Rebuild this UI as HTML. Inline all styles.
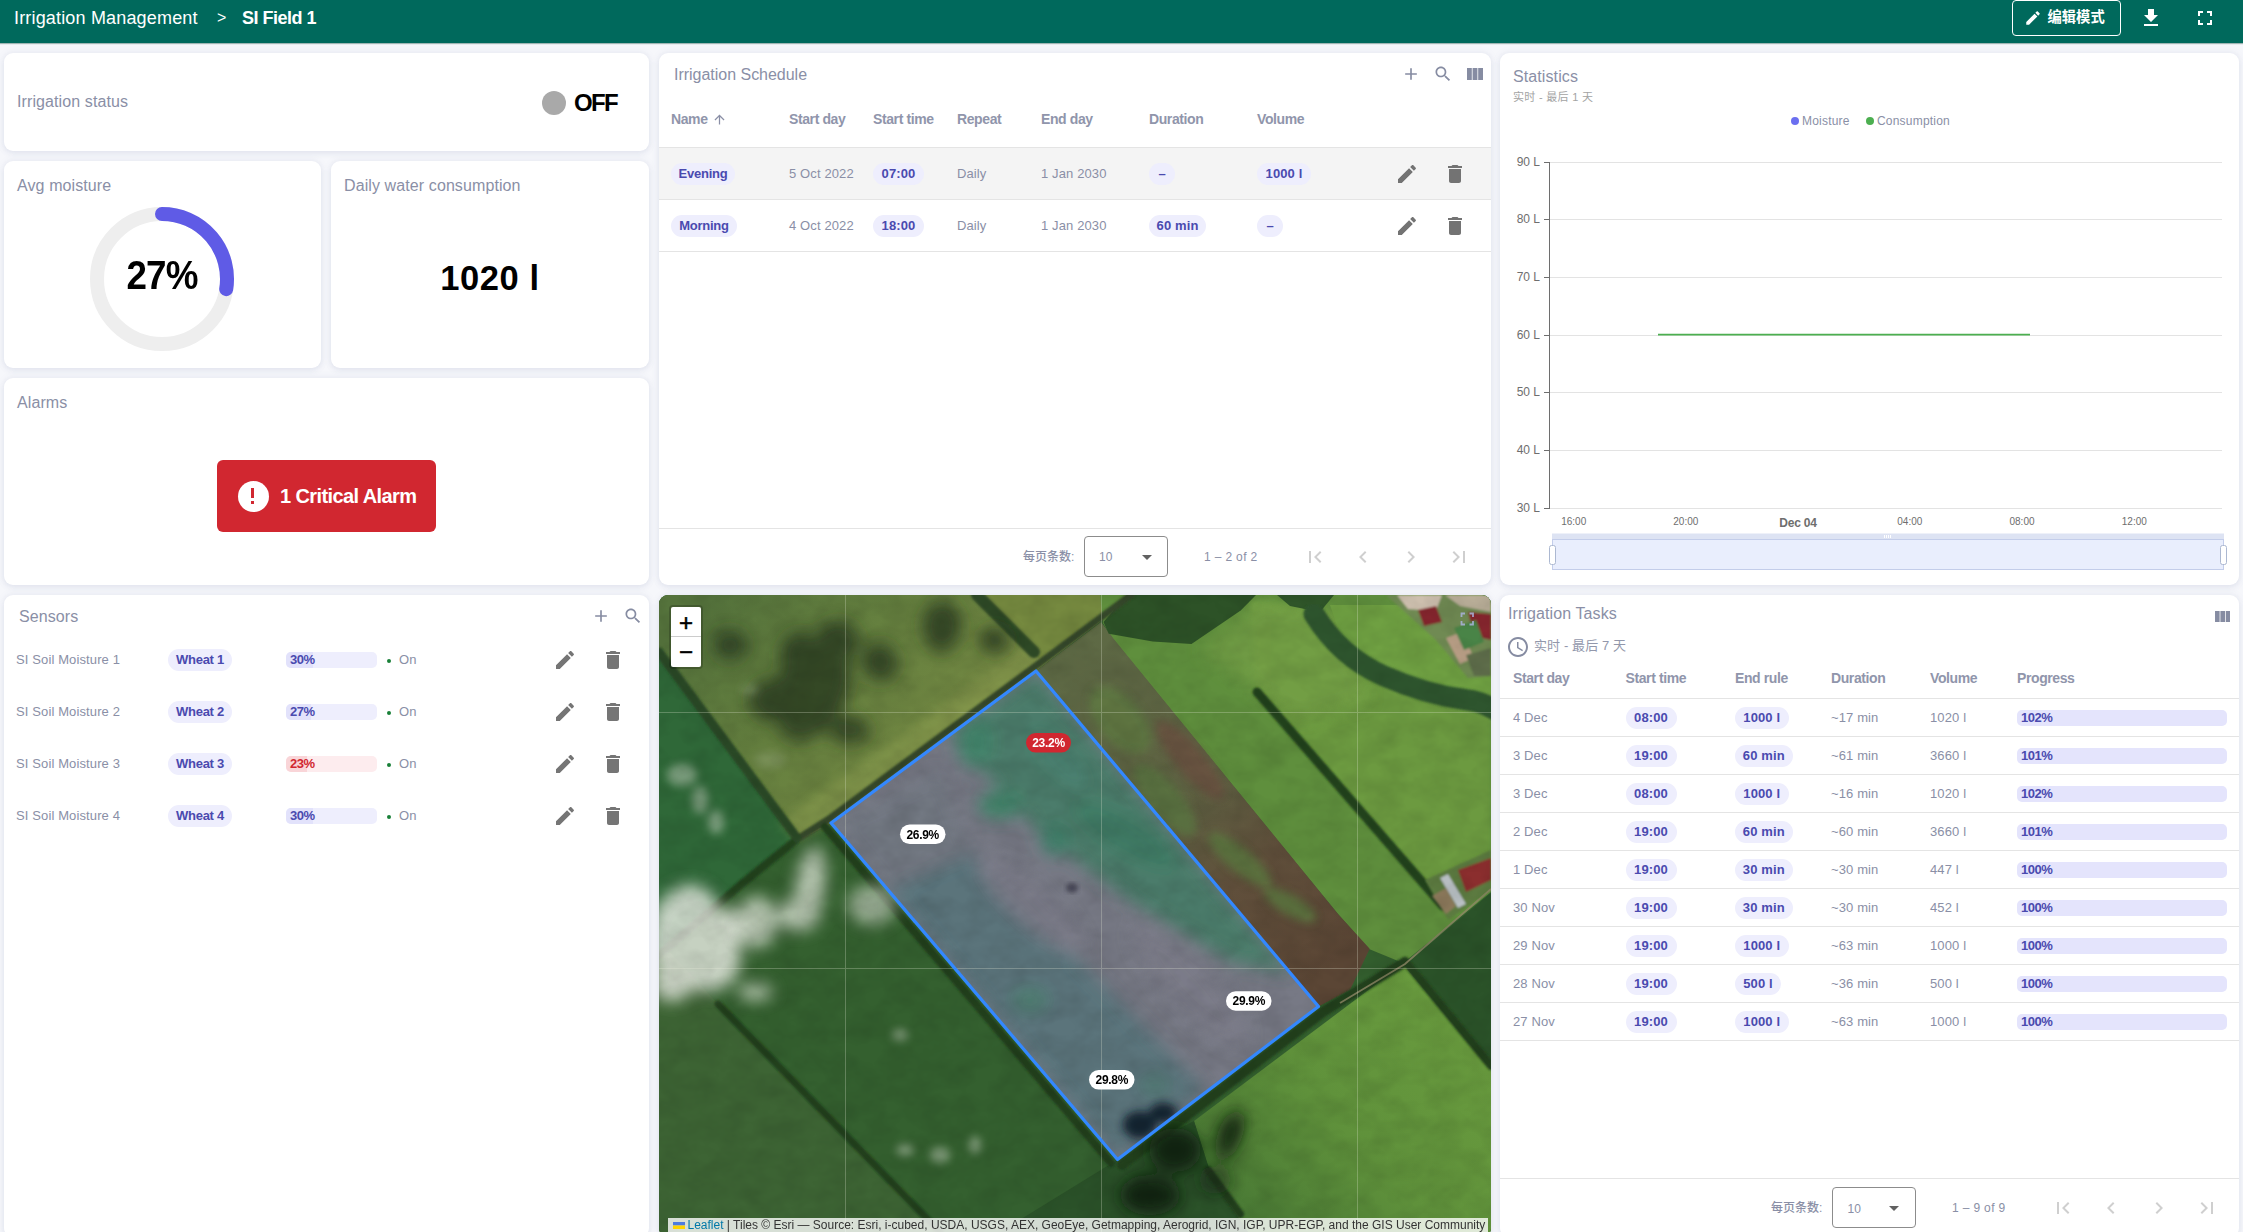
<!DOCTYPE html>
<html lang="zh-CN">
<head>
<meta charset="utf-8">
<title>Irrigation Management - SI Field 1</title>
<style>
*{box-sizing:border-box;margin:0;padding:0}
html,body{width:2243px;height:1232px;overflow:hidden}
body{background:#f6f7fb;font-family:"Liberation Sans","Noto Sans CJK SC",sans-serif;color:#8a8fa6;position:relative;font-size:13px}
.abs{position:absolute}
.hdr{position:absolute;left:0;top:0;width:2243px;height:43px;background:#00695c;color:#fff;box-shadow:0 1px 1px rgba(0,60,50,.35)}
.hdr .t{position:absolute;top:0;height:36px;line-height:36px;font-size:18px;white-space:nowrap}
.card{position:absolute;background:#fff;border-radius:9px;box-shadow:0 0 6px 1px rgba(120,130,170,.10),0 3px 6px rgba(120,130,170,.08);overflow:hidden}
.ttl{position:absolute;font-size:16px;line-height:20px;color:#8a8fa6;white-space:nowrap;letter-spacing:.1px;margin-top:1px}
.tx{position:absolute;white-space:nowrap;line-height:20px}
.ic{position:absolute;fill:#757575}
.pill{position:absolute;height:22px;line-height:22px;letter-spacing:-.25px;border-radius:11px;background:#eeeefd;color:#4a4aaf;font-weight:bold;font-size:13px;text-align:center;white-space:nowrap}
.pill.n{letter-spacing:.12px}
.bar{position:absolute;height:16px;border-radius:5px;background:#eeeefd;overflow:hidden}
.bar i{position:absolute;left:0;top:0;bottom:0;background:#e2e2fb}
.bar b{position:absolute;left:4px;top:0;line-height:16px;font-size:13px;color:#4a4aaf;font-weight:bold;letter-spacing:-.5px}
.bar.red{background:#fdecee}
.bar.red i{background:#f9d5d8}
.bar.red b{color:#d12730}
.hl{position:absolute;height:1px;background:#e4e4e4}
.th{position:absolute;white-space:nowrap;font-size:14px;line-height:20px;color:#9095ab;font-weight:bold;letter-spacing:-.4px}
.td{position:absolute;white-space:nowrap;font-size:13px;line-height:20px;color:#8a8fa6;letter-spacing:.12px}
</style>
</head>
<body>

<!-- ===== top toolbar ===== -->
<div class="hdr">
  <div class="t" style="left:14px;letter-spacing:.17px">Irrigation Management</div>
  <div class="t" style="left:217px;font-size:16px">&gt;</div>
  <div class="t" style="left:242px;font-weight:bold;letter-spacing:-.5px">SI Field 1</div>
  <div class="abs" style="left:2012px;top:0;width:109px;height:36px;border:1px solid #fff;border-radius:4px"></div>
  <svg class="abs" style="left:2024px;top:9px;fill:#fff" width="18" height="18" viewBox="0 0 24 24"><path d="M3 17.25V21h3.75L17.81 9.94l-3.75-3.75L3 17.25zM20.71 7.04c.39-.39.39-1.02 0-1.41l-2.34-2.34c-.39-.39-1.02-.39-1.41 0l-1.83 1.83 3.75 3.75 1.83-1.83z"/></svg>
  <div class="t" style="left:2047.5px;font-size:14.3px;font-weight:bold;line-height:34px">编辑模式</div>
  <svg class="abs" style="left:2139px;top:6px;fill:#fff" width="24" height="24" viewBox="0 0 24 24"><path d="M19 9h-4V3H9v6H5l7 7 7-7zM5 18v2h14v-2H5z"/></svg>
  <svg class="abs" style="left:2193px;top:6px;fill:#fff" width="24" height="24" viewBox="0 0 24 24"><path d="M7 14H5v5h5v-2H7v-3zm-2-4h2V7h3V5H5v5zm12 7h-3v2h5v-5h-2v3zM14 5v2h3v3h2V5h-5z"/></svg>
</div>

<!-- ===== Irrigation status ===== -->
<div class="card" style="left:4px;top:53px;width:645px;height:98px">
  <div class="ttl" style="left:13px;top:38px">Irrigation status</div>
  <div class="abs" style="left:538px;top:38px;width:24px;height:24px;border-radius:50%;background:#a9a9a9"></div>
  <div class="tx" style="left:570px;top:34px;font-size:24px;line-height:32px;font-weight:bold;color:#000;letter-spacing:-1.7px">OFF</div>
</div>

<!-- ===== Avg moisture ===== -->
<div class="card" style="left:4px;top:161px;width:317px;height:207px">
  <div class="ttl" style="left:13px;top:14px">Avg moisture</div>
  <svg class="abs" style="left:78px;top:38px" width="160" height="160" viewBox="0 0 160 160">
    <circle cx="80" cy="80" r="65" fill="none" stroke="#eeeeee" stroke-width="14"/>
    <path d="M80 15 A65 65 0 0 1 144.2 90.2" fill="none" stroke="#5f5be6" stroke-width="14" stroke-linecap="round"/>
  </svg>
  <div class="tx" style="left:78px;top:88px;width:160px;text-align:center;font-size:40px;line-height:52px;font-weight:bold;color:#000;letter-spacing:-1px;transform:scaleX(.92)">27%</div>
</div>

<!-- ===== Daily water consumption ===== -->
<div class="card" style="left:331px;top:161px;width:318px;height:207px">
  <div class="ttl" style="left:13px;top:14px">Daily water consumption</div>
  <div class="tx" style="left:0;top:91.5px;width:318px;text-align:center;font-size:34.5px;line-height:50px;font-weight:bold;color:#000;letter-spacing:.6px">1020 l</div>
</div>

<!-- ===== Alarms ===== -->
<div class="card" style="left:4px;top:378px;width:645px;height:207px">
  <div class="ttl" style="left:13px;top:14px">Alarms</div>
  <div class="abs" style="left:213px;top:82px;width:219px;height:72px;border-radius:6px;background:#d12730"></div>
  <div class="abs" style="left:233.5px;top:102.5px;width:31px;height:31px;border-radius:50%;background:#fff"></div>
  <div class="abs" style="left:247px;top:110px;width:3px;height:10px;background:#d12730"></div>
  <div class="abs" style="left:247px;top:123px;width:3px;height:3px;background:#d12730"></div>
  <div class="tx" style="left:276px;top:104px;font-size:20px;line-height:28px;font-weight:bold;color:#fff;letter-spacing:-.6px">1 Critical Alarm</div>
</div>

<!-- ===== Sensors ===== -->
<div class="card" style="left:4px;top:595px;width:645px;height:642px">
  <div class="ttl" style="left:15px;top:11px">Sensors</div>
  <svg class="ic" style="left:586.7px;top:10.9px;fill:#868ca2" width="20" height="20" viewBox="0 0 24 24"><path d="M19 13h-6v6h-2v-6H5v-2h6V5h2v6h6v2z"/></svg>
  <svg class="ic" style="left:618.7px;top:11.2px;fill:#868ca2" width="20" height="20" viewBox="0 0 24 24"><path d="M15.5 14h-.79l-.28-.27C15.41 12.59 16 11.11 16 9.5 16 5.91 13.09 3 9.5 3S3 5.91 3 9.5 5.91 16 9.5 16c1.61 0 3.09-.59 4.23-1.57l.27.28v.79l5 4.99L20.49 19l-4.99-5zm-6 0C7.01 14 5 11.99 5 9.5S7.01 5 9.5 5 14 7.01 14 9.5 11.99 14 9.5 14z"/></svg>
  <div class="td" style="left:12px;top:55px">SI Soil Moisture 1</div>
  <div class="pill" style="left:164px;top:54px;width:64px">Wheat 1</div>
  <div class="bar" style="left:282px;top:57px;width:91px"><i style="width:30%"></i><b>30%</b></div>
  <div class="abs" style="left:383px;top:64px;width:4px;height:4px;border-radius:50%;background:#198038"></div>
  <div class="td" style="left:395px;top:55px">On</div>
  <svg class="ic" style="left:549px;top:53px" width="24" height="24" viewBox="0 0 24 24"><path d="M3 17.25V21h3.75L17.81 9.94l-3.75-3.75L3 17.25zM20.71 7.04c.39-.39.39-1.02 0-1.41l-2.34-2.34c-.39-.39-1.02-.39-1.41 0l-1.83 1.83 3.75 3.75 1.83-1.83z"/></svg>
  <svg class="ic" style="left:597px;top:53px" width="24" height="24" viewBox="0 0 24 24"><path d="M6 19c0 1.1.9 2 2 2h8c1.1 0 2-.9 2-2V7H6v12zM19 4h-3.5l-1-1h-5l-1 1H5v2h14V4z"/></svg>
  <div class="td" style="left:12px;top:107px">SI Soil Moisture 2</div>
  <div class="pill" style="left:164px;top:106px;width:64px">Wheat 2</div>
  <div class="bar" style="left:282px;top:109px;width:91px"><i style="width:27%"></i><b>27%</b></div>
  <div class="abs" style="left:383px;top:116px;width:4px;height:4px;border-radius:50%;background:#198038"></div>
  <div class="td" style="left:395px;top:107px">On</div>
  <svg class="ic" style="left:549px;top:105px" width="24" height="24" viewBox="0 0 24 24"><path d="M3 17.25V21h3.75L17.81 9.94l-3.75-3.75L3 17.25zM20.71 7.04c.39-.39.39-1.02 0-1.41l-2.34-2.34c-.39-.39-1.02-.39-1.41 0l-1.83 1.83 3.75 3.75 1.83-1.83z"/></svg>
  <svg class="ic" style="left:597px;top:105px" width="24" height="24" viewBox="0 0 24 24"><path d="M6 19c0 1.1.9 2 2 2h8c1.1 0 2-.9 2-2V7H6v12zM19 4h-3.5l-1-1h-5l-1 1H5v2h14V4z"/></svg>
  <div class="td" style="left:12px;top:159px">SI Soil Moisture 3</div>
  <div class="pill" style="left:164px;top:158px;width:64px">Wheat 3</div>
  <div class="bar red" style="left:282px;top:161px;width:91px"><i style="width:23%"></i><b>23%</b></div>
  <div class="abs" style="left:383px;top:168px;width:4px;height:4px;border-radius:50%;background:#198038"></div>
  <div class="td" style="left:395px;top:159px">On</div>
  <svg class="ic" style="left:549px;top:157px" width="24" height="24" viewBox="0 0 24 24"><path d="M3 17.25V21h3.75L17.81 9.94l-3.75-3.75L3 17.25zM20.71 7.04c.39-.39.39-1.02 0-1.41l-2.34-2.34c-.39-.39-1.02-.39-1.41 0l-1.83 1.83 3.75 3.75 1.83-1.83z"/></svg>
  <svg class="ic" style="left:597px;top:157px" width="24" height="24" viewBox="0 0 24 24"><path d="M6 19c0 1.1.9 2 2 2h8c1.1 0 2-.9 2-2V7H6v12zM19 4h-3.5l-1-1h-5l-1 1H5v2h14V4z"/></svg>
  <div class="td" style="left:12px;top:211px">SI Soil Moisture 4</div>
  <div class="pill" style="left:164px;top:210px;width:64px">Wheat 4</div>
  <div class="bar" style="left:282px;top:213px;width:91px"><i style="width:30%"></i><b>30%</b></div>
  <div class="abs" style="left:383px;top:220px;width:4px;height:4px;border-radius:50%;background:#198038"></div>
  <div class="td" style="left:395px;top:211px">On</div>
  <svg class="ic" style="left:549px;top:209px" width="24" height="24" viewBox="0 0 24 24"><path d="M3 17.25V21h3.75L17.81 9.94l-3.75-3.75L3 17.25zM20.71 7.04c.39-.39.39-1.02 0-1.41l-2.34-2.34c-.39-.39-1.02-.39-1.41 0l-1.83 1.83 3.75 3.75 1.83-1.83z"/></svg>
  <svg class="ic" style="left:597px;top:209px" width="24" height="24" viewBox="0 0 24 24"><path d="M6 19c0 1.1.9 2 2 2h8c1.1 0 2-.9 2-2V7H6v12zM19 4h-3.5l-1-1h-5l-1 1H5v2h14V4z"/></svg>
</div>


<!-- ===== Irrigation Schedule ===== -->
<div class="card" style="left:659px;top:53px;width:832px;height:532px">
  <div class="ttl" style="left:15px;top:11px;letter-spacing:-.02px">Irrigation Schedule</div>
  <svg class="ic" style="left:742px;top:11px;fill:#868ca2" width="20" height="20" viewBox="0 0 24 24"><path d="M19 13h-6v6h-2v-6H5v-2h6V5h2v6h6v2z"/></svg>
  <svg class="ic" style="left:773.6px;top:11.3px;fill:#868ca2" width="20" height="20" viewBox="0 0 24 24"><path d="M15.5 14h-.79l-.28-.27C15.41 12.59 16 11.11 16 9.5 16 5.91 13.09 3 9.5 3S3 5.91 3 9.5 5.91 16 9.5 16c1.61 0 3.09-.59 4.23-1.57l.27.28v.79l5 4.99L20.49 19l-4.99-5zm-6 0C7.01 14 5 11.99 5 9.5S7.01 5 9.5 5 14 7.01 14 9.5 11.99 14 9.5 14z"/></svg>
  <svg class="ic" style="left:808px;top:15px;fill:#868ca2" width="16" height="12" viewBox="0 0 16 12"><rect x="0" y="0" width="4.8" height="12"/><rect x="5.6" y="0" width="4.8" height="12"/><rect x="11.2" y="0" width="4.8" height="12"/></svg>
  <div class="th" style="left:12px;top:56px">Name</div>
  <div class="th" style="left:130px;top:56px">Start day</div>
  <div class="th" style="left:214px;top:56px">Start time</div>
  <div class="th" style="left:298px;top:56px">Repeat</div>
  <div class="th" style="left:382px;top:56px">End day</div>
  <div class="th" style="left:490px;top:56px">Duration</div>
  <div class="th" style="left:598px;top:56px">Volume</div>
  <svg class="ic" style="left:53px;top:59px;fill:#8a8fa6" width="15" height="15" viewBox="0 0 24 24"><path d="M4 12l1.41 1.41L11 7.83V20h2V7.83l5.58 5.59L20 12l-8-8-8 8z"/></svg>
  <div class="hl" style="left:0;top:94px;width:832px"></div>
  <div class="abs" style="left:0;top:95px;width:832px;height:51px;background:#f4f4f4"></div>
  <div class="hl" style="left:0;top:146px;width:832px"></div>
  <div class="hl" style="left:0;top:198px;width:832px"></div>
  <div class="pill" style="left:12px;top:110px;width:64px">Evening</div>
  <div class="td" style="left:130px;top:111px">5 Oct 2022</div>
  <div class="pill n" style="left:214px;top:110px;width:51px">07:00</div>
  <div class="td" style="left:298px;top:111px">Daily</div>
  <div class="td" style="left:382px;top:111px">1 Jan 2030</div>
  <div class="pill" style="left:490px;top:110px;width:26px">–</div>
  <div class="pill n" style="left:598px;top:110px;width:54px">1000 l</div>
  <svg class="ic" style="left:736px;top:109px;fill:#737373" width="24" height="24" viewBox="0 0 24 24"><path d="M3 17.25V21h3.75L17.81 9.94l-3.75-3.75L3 17.25zM20.71 7.04c.39-.39.39-1.02 0-1.41l-2.34-2.34c-.39-.39-1.02-.39-1.41 0l-1.83 1.83 3.75 3.75 1.83-1.83z"/></svg>
  <svg class="ic" style="left:784px;top:109px;fill:#737373" width="24" height="24" viewBox="0 0 24 24"><path d="M6 19c0 1.1.9 2 2 2h8c1.1 0 2-.9 2-2V7H6v12zM19 4h-3.5l-1-1h-5l-1 1H5v2h14V4z"/></svg>
  <div class="pill" style="left:12px;top:162px;width:66px">Morning</div>
  <div class="td" style="left:130px;top:163px">4 Oct 2022</div>
  <div class="pill n" style="left:214px;top:162px;width:51px">18:00</div>
  <div class="td" style="left:298px;top:163px">Daily</div>
  <div class="td" style="left:382px;top:163px">1 Jan 2030</div>
  <div class="pill n" style="left:490px;top:162px;width:57px">60 min</div>
  <div class="pill" style="left:598px;top:162px;width:26px">–</div>
  <svg class="ic" style="left:736px;top:161px;fill:#737373" width="24" height="24" viewBox="0 0 24 24"><path d="M3 17.25V21h3.75L17.81 9.94l-3.75-3.75L3 17.25zM20.71 7.04c.39-.39.39-1.02 0-1.41l-2.34-2.34c-.39-.39-1.02-.39-1.41 0l-1.83 1.83 3.75 3.75 1.83-1.83z"/></svg>
  <svg class="ic" style="left:784px;top:161px;fill:#737373" width="24" height="24" viewBox="0 0 24 24"><path d="M6 19c0 1.1.9 2 2 2h8c1.1 0 2-.9 2-2V7H6v12zM19 4h-3.5l-1-1h-5l-1 1H5v2h14V4z"/></svg>
  <div class="hl" style="left:0;top:475px;width:832px"></div>
  <div class="tx" style="left:364px;top:494px;font-size:12px;color:#8a8fa6;font-weight:500">每页条数:</div>
  <div class="abs" style="left:425px;top:483px;width:84px;height:41px;border:1px solid #8c8c8c;border-radius:4px"></div>
  <div class="tx" style="left:440px;top:494px;font-size:12px;color:#8a8fa6">10</div>
  <svg class="ic" style="left:476px;top:492px;fill:#616161" width="24" height="24" viewBox="0 0 24 24"><path d="M7 10l5 5 5-5z"/></svg>
  <div class="tx" style="left:545px;top:494px;font-size:12px;color:#8a8fa6;letter-spacing:.35px">1 – 2 of 2</div>
  <svg class="ic" style="left:644px;top:492px;fill:#cfcfcf" width="24" height="24" viewBox="0 0 24 24"><path d="M18.41 16.59L13.82 12l4.59-4.59L17 6l-6 6 6 6zM6 6h2v12H6z"/></svg>
  <svg class="ic" style="left:692px;top:492px;fill:#cfcfcf" width="24" height="24" viewBox="0 0 24 24"><path d="M15.41 7.41L14 6l-6 6 6 6 1.41-1.41L10.83 12z"/></svg>
  <svg class="ic" style="left:740px;top:492px;fill:#cfcfcf" width="24" height="24" viewBox="0 0 24 24"><path d="M10 6L8.59 7.41 13.17 12l-4.58 4.59L10 18l6-6z"/></svg>
  <svg class="ic" style="left:788px;top:492px;fill:#cfcfcf" width="24" height="24" viewBox="0 0 24 24"><path d="M5.59 7.41L10.18 12l-4.59 4.59L7 18l6-6-6-6zM16 6h2v12h-2z"/></svg>
</div>


<!-- ===== Statistics ===== -->
<div class="card" style="left:1500px;top:53px;width:739px;height:532px">
  <div class="ttl" style="left:13px;top:13px">Statistics</div>
  <div class="tx" style="left:13px;top:34px;font-size:11px;color:#a3a3a3;letter-spacing:.3px">实时 - 最后 1 天</div>
  <div class="abs" style="left:290.5px;top:64px;width:8px;height:8px;border-radius:50%;background:#6b6ff0"></div>
  <div class="tx" style="left:302px;top:58px;font-size:12px;color:#8a8fa6;letter-spacing:.2px">Moisture</div>
  <div class="abs" style="left:365.5px;top:64px;width:8px;height:8px;border-radius:50%;background:#4caf50"></div>
  <div class="tx" style="left:377px;top:58px;font-size:12px;color:#8a8fa6;letter-spacing:.2px">Consumption</div>
  <svg class="abs" style="left:0;top:0" width="739" height="532" viewBox="1500 53 739 532" font-family="Liberation Sans, sans-serif">
    <line x1="1549" y1="162.5" x2="2222" y2="162.5" stroke="#e3e3e3" stroke-width="1"/>
    <line x1="1544" y1="162.5" x2="1549" y2="162.5" stroke="#6e6e6e" stroke-width="1"/>
    <text x="1540" y="165.9" text-anchor="end" font-size="12" fill="#6e6e6e">90 L</text>
    <line x1="1549" y1="219.5" x2="2222" y2="219.5" stroke="#e3e3e3" stroke-width="1"/>
    <line x1="1544" y1="219.5" x2="1549" y2="219.5" stroke="#6e6e6e" stroke-width="1"/>
    <text x="1540" y="222.9" text-anchor="end" font-size="12" fill="#6e6e6e">80 L</text>
    <line x1="1549" y1="277.5" x2="2222" y2="277.5" stroke="#e3e3e3" stroke-width="1"/>
    <line x1="1544" y1="277.5" x2="1549" y2="277.5" stroke="#6e6e6e" stroke-width="1"/>
    <text x="1540" y="280.9" text-anchor="end" font-size="12" fill="#6e6e6e">70 L</text>
    <line x1="1549" y1="335.5" x2="2222" y2="335.5" stroke="#e3e3e3" stroke-width="1"/>
    <line x1="1544" y1="335.5" x2="1549" y2="335.5" stroke="#6e6e6e" stroke-width="1"/>
    <text x="1540" y="338.9" text-anchor="end" font-size="12" fill="#6e6e6e">60 L</text>
    <line x1="1549" y1="392.5" x2="2222" y2="392.5" stroke="#e3e3e3" stroke-width="1"/>
    <line x1="1544" y1="392.5" x2="1549" y2="392.5" stroke="#6e6e6e" stroke-width="1"/>
    <text x="1540" y="395.9" text-anchor="end" font-size="12" fill="#6e6e6e">50 L</text>
    <line x1="1549" y1="450.5" x2="2222" y2="450.5" stroke="#e3e3e3" stroke-width="1"/>
    <line x1="1544" y1="450.5" x2="1549" y2="450.5" stroke="#6e6e6e" stroke-width="1"/>
    <text x="1540" y="453.9" text-anchor="end" font-size="12" fill="#6e6e6e">40 L</text>
    <line x1="1549" y1="508.5" x2="2222" y2="508.5" stroke="#e3e3e3" stroke-width="1"/>
    <line x1="1544" y1="508.5" x2="1549" y2="508.5" stroke="#6e6e6e" stroke-width="1"/>
    <text x="1540" y="511.9" text-anchor="end" font-size="12" fill="#6e6e6e">30 L</text>
    <line x1="1549.5" y1="162" x2="1549.5" y2="509" stroke="#6e6e6e" stroke-width="1"/>
    <line x1="1658" y1="334.6" x2="2030" y2="334.6" stroke="#4caf50" stroke-width="1.8"/>
    <text x="1573.7" y="525" text-anchor="middle" font-size="10" fill="#6e6e6e">16:00</text>
    <text x="1685.8" y="525" text-anchor="middle" font-size="10" fill="#6e6e6e">20:00</text>
    <text x="1798" y="526.5" text-anchor="middle" font-size="12" font-weight="bold" fill="#6e6e6e" letter-spacing="-0.2">Dec 04</text>
    <text x="1909.8" y="525" text-anchor="middle" font-size="10" fill="#6e6e6e">04:00</text>
    <text x="2022" y="525" text-anchor="middle" font-size="10" fill="#6e6e6e">08:00</text>
    <text x="2134.3" y="525" text-anchor="middle" font-size="10" fill="#6e6e6e">12:00</text>
    <rect x="1552" y="533.5" width="672" height="6" fill="#dde3f3"/>
    <rect x="1552.5" y="539.5" width="671" height="30" fill="#e9eefd" stroke="#c3cdea" stroke-width="1"/>
    <rect x="1884" y="535" width="1" height="3" fill="#fff"/><rect x="1886" y="535" width="1" height="3" fill="#fff"/><rect x="1888" y="535" width="1" height="3" fill="#fff"/><rect x="1890" y="535" width="1" height="3" fill="#fff"/>
    <rect x="1549.5" y="545.5" width="6" height="19" rx="2" fill="#fff" stroke="#acb8d1" stroke-width="1"/>
    <rect x="2220.5" y="545.5" width="6" height="19" rx="2" fill="#fff" stroke="#acb8d1" stroke-width="1"/>
  </svg>
</div>


<!-- ===== Irrigation Tasks ===== -->
<div class="card" style="left:1500px;top:595px;width:739px;height:642px">
  <div class="ttl" style="left:8px;top:8px">Irrigation Tasks</div>
  <svg class="ic" style="left:715px;top:15.5px;fill:#868ca2" width="15.4" height="11.5" viewBox="0 0 16 12"><rect x="0" y="0" width="4.8" height="12"/><rect x="5.6" y="0" width="4.8" height="12"/><rect x="11.2" y="0" width="4.8" height="12"/></svg>
  <svg class="ic" style="left:5.7px;top:39.7px;fill:#868ca2" width="24" height="24" viewBox="0 0 24 24"><path d="M11.99 2C6.47 2 2 6.48 2 12s4.47 10 9.99 10C17.52 22 22 17.52 22 12S17.52 2 11.99 2zM12 20c-4.42 0-8-3.58-8-8s3.58-8 8-8 8 3.58 8 8-3.58 8-8 8zm.5-13H11v6l5.25 3.15.75-1.23-4.5-2.67z"/></svg>
  <div class="tx" style="left:34px;top:41px;font-size:13px;color:#9297ab;letter-spacing:.1px">实时 - 最后 7 天</div>
  <div class="th" style="left:13px;top:73px">Start day</div>
  <div class="th" style="left:125.5px;top:73px">Start time</div>
  <div class="th" style="left:235px;top:73px">End rule</div>
  <div class="th" style="left:331px;top:73px">Duration</div>
  <div class="th" style="left:430px;top:73px">Volume</div>
  <div class="th" style="left:517px;top:73px">Progress</div>
  <div class="hl" style="left:0;top:103px;width:739px"></div>
  <div class="td" style="left:13px;top:112.5px">4 Dec</div>
  <div class="pill n" style="left:125.5px;top:111.5px;width:51px">08:00</div>
  <div class="pill n" style="left:235px;top:111.5px;width:53.5px">1000 l</div>
  <div class="td" style="left:331px;top:112.5px">~17 min</div>
  <div class="td" style="left:430px;top:112.5px">1020 l</div>
  <div class="bar" style="left:517px;top:114.8px;width:209.5px;background:#e4e4fc"><b>102%</b></div>
  <div class="hl" style="left:0;top:141px;width:739px"></div>
  <div class="td" style="left:13px;top:150.5px">3 Dec</div>
  <div class="pill n" style="left:125.5px;top:149.5px;width:51px">19:00</div>
  <div class="pill n" style="left:235px;top:149.5px;width:57.5px">60 min</div>
  <div class="td" style="left:331px;top:150.5px">~61 min</div>
  <div class="td" style="left:430px;top:150.5px">3660 l</div>
  <div class="bar" style="left:517px;top:152.8px;width:209.5px;background:#e4e4fc"><b>101%</b></div>
  <div class="hl" style="left:0;top:179px;width:739px"></div>
  <div class="td" style="left:13px;top:188.5px">3 Dec</div>
  <div class="pill n" style="left:125.5px;top:187.5px;width:51px">08:00</div>
  <div class="pill n" style="left:235px;top:187.5px;width:53.5px">1000 l</div>
  <div class="td" style="left:331px;top:188.5px">~16 min</div>
  <div class="td" style="left:430px;top:188.5px">1020 l</div>
  <div class="bar" style="left:517px;top:190.8px;width:209.5px;background:#e4e4fc"><b>102%</b></div>
  <div class="hl" style="left:0;top:217px;width:739px"></div>
  <div class="td" style="left:13px;top:226.5px">2 Dec</div>
  <div class="pill n" style="left:125.5px;top:225.5px;width:51px">19:00</div>
  <div class="pill n" style="left:235px;top:225.5px;width:57.5px">60 min</div>
  <div class="td" style="left:331px;top:226.5px">~60 min</div>
  <div class="td" style="left:430px;top:226.5px">3660 l</div>
  <div class="bar" style="left:517px;top:228.8px;width:209.5px;background:#e4e4fc"><b>101%</b></div>
  <div class="hl" style="left:0;top:255px;width:739px"></div>
  <div class="td" style="left:13px;top:264.5px">1 Dec</div>
  <div class="pill n" style="left:125.5px;top:263.5px;width:51px">19:00</div>
  <div class="pill n" style="left:235px;top:263.5px;width:57.5px">30 min</div>
  <div class="td" style="left:331px;top:264.5px">~30 min</div>
  <div class="td" style="left:430px;top:264.5px">447 l</div>
  <div class="bar" style="left:517px;top:266.8px;width:209.5px;background:#e4e4fc"><b>100%</b></div>
  <div class="hl" style="left:0;top:293px;width:739px"></div>
  <div class="td" style="left:13px;top:302.5px">30 Nov</div>
  <div class="pill n" style="left:125.5px;top:301.5px;width:51px">19:00</div>
  <div class="pill n" style="left:235px;top:301.5px;width:57.5px">30 min</div>
  <div class="td" style="left:331px;top:302.5px">~30 min</div>
  <div class="td" style="left:430px;top:302.5px">452 l</div>
  <div class="bar" style="left:517px;top:304.8px;width:209.5px;background:#e4e4fc"><b>100%</b></div>
  <div class="hl" style="left:0;top:331px;width:739px"></div>
  <div class="td" style="left:13px;top:340.5px">29 Nov</div>
  <div class="pill n" style="left:125.5px;top:339.5px;width:51px">19:00</div>
  <div class="pill n" style="left:235px;top:339.5px;width:53.5px">1000 l</div>
  <div class="td" style="left:331px;top:340.5px">~63 min</div>
  <div class="td" style="left:430px;top:340.5px">1000 l</div>
  <div class="bar" style="left:517px;top:342.8px;width:209.5px;background:#e4e4fc"><b>100%</b></div>
  <div class="hl" style="left:0;top:369px;width:739px"></div>
  <div class="td" style="left:13px;top:378.5px">28 Nov</div>
  <div class="pill n" style="left:125.5px;top:377.5px;width:51px">19:00</div>
  <div class="pill n" style="left:235px;top:377.5px;width:46px">500 l</div>
  <div class="td" style="left:331px;top:378.5px">~36 min</div>
  <div class="td" style="left:430px;top:378.5px">500 l</div>
  <div class="bar" style="left:517px;top:380.8px;width:209.5px;background:#e4e4fc"><b>100%</b></div>
  <div class="hl" style="left:0;top:407px;width:739px"></div>
  <div class="td" style="left:13px;top:416.5px">27 Nov</div>
  <div class="pill n" style="left:125.5px;top:415.5px;width:51px">19:00</div>
  <div class="pill n" style="left:235px;top:415.5px;width:53.5px">1000 l</div>
  <div class="td" style="left:331px;top:416.5px">~63 min</div>
  <div class="td" style="left:430px;top:416.5px">1000 l</div>
  <div class="bar" style="left:517px;top:418.8px;width:209.5px;background:#e4e4fc"><b>100%</b></div>
  <div class="hl" style="left:0;top:445px;width:739px"></div>
  <div class="hl" style="left:0;top:583px;width:739px"></div>
  <div class="tx" style="left:271px;top:603px;font-size:12px;color:#8a8fa6;font-weight:500">每页条数:</div>
  <div class="abs" style="left:332px;top:592px;width:83.5px;height:41px;border:1px solid #8c8c8c;border-radius:4px"></div>
  <div class="tx" style="left:347.5px;top:603.5px;font-size:12px;color:#8a8fa6">10</div>
  <svg class="ic" style="left:382.3px;top:600.7px;fill:#616161" width="24" height="24" viewBox="0 0 24 24"><path d="M7 10l5 5 5-5z"/></svg>
  <div class="tx" style="left:452px;top:603px;font-size:12px;color:#8a8fa6;letter-spacing:.35px">1 – 9 of 9</div>
  <svg class="ic" style="left:550.5px;top:600.5px;fill:#cfcfcf" width="24" height="24" viewBox="0 0 24 24"><path d="M18.41 16.59L13.82 12l4.59-4.59L17 6l-6 6 6 6zM6 6h2v12H6z"/></svg>
  <svg class="ic" style="left:598.5px;top:600.5px;fill:#cfcfcf" width="24" height="24" viewBox="0 0 24 24"><path d="M15.41 7.41L14 6l-6 6 6 6 1.41-1.41L10.83 12z"/></svg>
  <svg class="ic" style="left:646.5px;top:600.5px;fill:#cfcfcf" width="24" height="24" viewBox="0 0 24 24"><path d="M10 6L8.59 7.41 13.17 12l-4.58 4.59L10 18l6-6z"/></svg>
  <svg class="ic" style="left:694.5px;top:600.5px;fill:#cfcfcf" width="24" height="24" viewBox="0 0 24 24"><path d="M5.59 7.41L10.18 12l-4.59 4.59L7 18l6-6-6-6zM16 6h2v12h-2z"/></svg>
</div>


<!--MAPSTART-->
<!-- ===== Map ===== -->
<div class="card" style="left:659px;top:595px;width:832px;height:642px;background:#33632f;border-radius:9px">
<svg class="abs" style="left:0;top:0" width="832" height="637" viewBox="659 595 832 637" font-family="Liberation Sans, sans-serif">
  <defs>
    <filter id="b1" x="-10%" y="-10%" width="120%" height="120%"><feGaussianBlur stdDeviation="1"/></filter>
    <filter id="b2" x="-20%" y="-20%" width="140%" height="140%"><feGaussianBlur stdDeviation="2.2"/></filter>
    <filter id="b4" x="-30%" y="-30%" width="160%" height="160%"><feGaussianBlur stdDeviation="4.5"/></filter>
    <filter id="b8" x="-40%" y="-40%" width="180%" height="180%"><feGaussianBlur stdDeviation="8"/></filter>
    <filter id="b14" x="-50%" y="-50%" width="200%" height="200%"><feGaussianBlur stdDeviation="14"/></filter>
    <filter id="noise" x="0" y="0" width="100%" height="100%">
      <feTurbulence type="fractalNoise" baseFrequency="0.035 0.05" numOctaves="3" seed="7" result="n"/>
      <feColorMatrix type="matrix" values="0 0 0 0 0  0 0 0 0 0  0 0 0 0 0  .9 .9 .9 0 -1.05"/>
    </filter>
    <linearGradient id="gBR" gradientUnits="userSpaceOnUse" x1="1080" y1="640" x2="1340" y2="960">
      <stop offset="0" stop-color="#5e6a45"/><stop offset=".45" stop-color="#5e6142"/><stop offset=".7" stop-color="#604f3b"/><stop offset="1" stop-color="#5b4635"/>
    </linearGradient>
    <linearGradient id="gLG" gradientUnits="userSpaceOnUse" x1="700" y1="610" x2="900" y2="800">
      <stop offset="0" stop-color="#55733c"/><stop offset=".5" stop-color="#65803f"/><stop offset=".85" stop-color="#6e8541"/><stop offset="1" stop-color="#7b8e47"/>
    </linearGradient>
    <linearGradient id="gBG1" gradientUnits="userSpaceOnUse" x1="1230" y1="1200" x2="1440" y2="1000">
      <stop offset="0" stop-color="#4a7a35"/><stop offset=".45" stop-color="#5f913b"/><stop offset="1" stop-color="#699b3e"/>
    </linearGradient>
    <clipPath id="cpP"><polygon points="1036,671 1318.5,1006.5 1117.5,1159.5 831,823"/></clipPath>
    <clipPath id="cpM"><rect x="659" y="595" width="832" height="637"/></clipPath>
  </defs>
  <g clip-path="url(#cpM)">
  <!-- base (SW fields) -->
  <rect x="659" y="595" width="832" height="637" fill="#34602f"/>
  <polygon points="659,940 718,1004 940,1232 659,1232" fill="#3d6434"/>
  <!-- left dark field -->
  <polygon points="659,650 800,838 744,882 659,955" fill="#2f6838"/>
  <!-- light green NW field -->
  <polygon points="659,595 1135,595 1036,671 831,823 796,842 659,655" fill="url(#gLG)"/>
  <polygon points="1036,671 831,823 796,842 780,822 1020,650" fill="#8a9c4f" opacity=".5" filter="url(#b4)"/>
  <!-- top small fields -->
  <polygon points="985,595 1128,595 1040,660" fill="#75893f"/>
  <!-- bright green NE -->
  <polygon points="1100,595 1491,595 1491,892 1403,963 1369,949 1338,914 1113,639 1103,623" fill="#5f8f3d"/>
  <polygon points="1256,691 1443,906 1491,870 1491,700 1330,610 1250,600" fill="#6c9a41" filter="url(#b2)"/>
  <polygon points="1200,650 1260,600 1330,612 1370,700 1300,720 1256,691" fill="#76a046" opacity=".7" filter="url(#b8)"/>
  <polygon points="1330,605 1491,605 1491,700 1430,690 1380,680 1345,650" fill="#6fa042"/>
  <!-- brown strip -->
  <polygon points="1036,671 1101,622 1113.8,639 1338,914 1369.7,948.7 1350,990 1318.5,1006.5" fill="url(#gBR)"/>
  <g filter="url(#b4)" opacity=".8">
    <ellipse cx="1120" cy="720" rx="22" ry="40" fill="#5f7a43" transform="rotate(-40 1120 720)"/>
    <ellipse cx="1165" cy="800" rx="16" ry="45" fill="#587540" transform="rotate(-40 1165 800)"/>
    <ellipse cx="1240" cy="860" rx="12" ry="40" fill="#5c7a40" transform="rotate(-50 1240 860)"/>
    <ellipse cx="1290" cy="905" rx="10" ry="30" fill="#5b7a3f" transform="rotate(-60 1290 905)"/>
    <ellipse cx="1190" cy="760" rx="14" ry="50" fill="#6a4f40" transform="rotate(-40 1190 760)"/>
  </g>
  <!-- top dark field -->
  <polygon points="1103.5,622 1126.8,595 1256,595 1240.7,610.5 1191.5,644 1152.7,641.6 1108.7,633.8" fill="#2d5227"/>
  <polygon points="1277,595 1334,595 1320,612 1290,606" fill="#2f5529"/>
  <!-- tree band T2 -->
  <path d="M1314 614 C1330 640 1352 662 1384 676 S1440 696 1462 699 S1485 705 1498 711" fill="none" stroke="#2e552d" stroke-width="21" stroke-linecap="round" filter="url(#b1)"/>
  <!-- buildings top right -->
  <g filter="url(#b1)">
    <polygon points="1386,595 1491,595 1491,676 1468,678 1436,640" fill="#6f8a52"/>
    <polygon points="1397,595 1442,595 1436,611 1408,609" fill="#cdbfae"/>
    <polygon points="1445,595 1491,595 1491,612 1460,606" fill="#b9ae98"/>
    <polygon points="1418,610 1436,606 1442,622 1424,626" fill="#86282d"/>
    <polygon points="1468,612 1491,614 1491,640 1474,636" fill="#86282d"/>
    <polygon points="1446,638 1462,632 1474,658 1460,664" fill="#b99f86"/>
    <polygon points="1454,628 1476,620 1484,642 1464,650" fill="#4a8446"/>
    <polygon points="1466,655 1491,648 1491,676 1474,676" fill="#5f6e4c"/>
  </g>
  <!-- tree line T1 -->
  <path d="M1257 692 L1443 906" stroke="#22421f" stroke-width="9" stroke-linecap="round" filter="url(#b1)"/>
  <!-- right dark field -->
  <polygon points="1408,962 1491,893 1491,1066" fill="#2b5329"/>
  <!-- bright green SE field -->
  <polygon points="1194,1121 1403,964 1491,1069 1491,1232 1248,1232 1212,1178" fill="url(#gBG1)"/>
  <!-- bottom centre dark -->
  <polygon points="1117,1160 1194,1121 1212,1178 1248,1232 1000,1232" fill="#2b5229"/>
  <!-- farm bottom right -->
  <g filter="url(#b1)">
    <polygon points="1425,880 1491,850 1491,890 1448,920" fill="#5c7a3f"/>
    <polygon points="1440,878 1448,874 1466,904 1458,908" fill="#b9c0c4"/>
    <polygon points="1458,870 1491,858 1491,880 1466,892" fill="#8b2f2e"/>
    <polygon points="1432,896 1446,888 1456,906 1446,914" fill="#8d7a5c"/>
  </g>
  <!-- hedges -->
  <g fill="none" stroke="#23411f" stroke-linecap="round" filter="url(#b1)">
    <path d="M1131 595 L1033 668 L829 819 L796 840" stroke-width="7" stroke="#34472a"/>
    <path d="M796 840 L744 882 L659 955" stroke-width="8" stroke="#21421f"/>
    <path d="M659 652 L797 838" stroke-width="9" stroke="#2a4a26"/>
    <path d="M977 595 L1034 652" stroke-width="12" stroke="#2f4a27"/>
    <path d="M825 827 L1111 1163" stroke-width="8"/>
    <path d="M718 1004 L940 1232" stroke-width="7" stroke="#20401e"/>
    <path d="M1122 1165 L1323 1012 L1405 962" stroke-width="10"/>
    <path d="M1405 961 L1491 1066" stroke-width="8"/>
    <path d="M1208 1170 L1240 1214" stroke-width="8"/>
  </g>
  <path d="M1340 1003 L1405 964 L1491 889" fill="none" stroke="#8f8767" stroke-width="1.8" opacity=".8"/>
  <!-- cloud shadows in NW field -->
  <g fill="#22321c" filter="url(#b8)" opacity=".72">
    <ellipse cx="812" cy="688" rx="36" ry="56" transform="rotate(22 812 688)"/><ellipse cx="800" cy="655" rx="20" ry="24"/>
    <ellipse cx="775" cy="700" rx="26" ry="22"/>
    <ellipse cx="838" cy="640" rx="22" ry="20"/>
    <ellipse cx="730" cy="645" rx="17" ry="16"/>
    <ellipse cx="880" cy="662" rx="18" ry="20"/>
    <ellipse cx="942" cy="626" rx="20" ry="26"/>
    <ellipse cx="995" cy="640" rx="14" ry="14"/>
    <ellipse cx="850" cy="730" rx="20" ry="14"/>
  </g>
  <!-- cloud shadows bottom -->
  <g fill="#101c10" filter="url(#b8)" opacity=".85">
    <ellipse cx="1175" cy="1150" rx="26" ry="22"/>
    <ellipse cx="1150" cy="1195" rx="30" ry="20"/>
    <ellipse cx="1230" cy="1135" rx="12" ry="26" transform="rotate(20 1230 1135)"/>
    <ellipse cx="1215" cy="1180" rx="16" ry="14" opacity=".6"/>
  </g>
  <!-- clouds -->
  <g fill="#eceee7" filter="url(#b8)" opacity=".8">
    <ellipse cx="690" cy="915" rx="30" ry="30"/>
    <ellipse cx="705" cy="960" rx="36" ry="32"/>
    <ellipse cx="672" cy="985" rx="20" ry="16"/>
    <ellipse cx="730" cy="930" rx="18" ry="22"/>
    <ellipse cx="664" cy="940" rx="14" ry="40"/>
  </g>
  <g fill="#e6e9e0" filter="url(#b8)" opacity=".7">
    <ellipse cx="757" cy="922" rx="20" ry="26"/>
    <ellipse cx="810" cy="888" rx="15" ry="42" transform="rotate(8 810 888)"/>
    <ellipse cx="798" cy="915" rx="22" ry="16"/>
    <ellipse cx="872" cy="905" rx="24" ry="20" opacity=".8"/>
    <ellipse cx="755" cy="992" rx="18" ry="8"/>
  </g>
  <g fill="#dfe3d8" filter="url(#b4)" opacity=".42">
    <ellipse cx="682" cy="775" rx="15" ry="11"/>
    <ellipse cx="700" cy="800" rx="8" ry="14"/>
    <ellipse cx="716" cy="822" rx="8" ry="12"/>
    <ellipse cx="905" cy="1150" rx="9" ry="6"/>
    <ellipse cx="940" cy="1155" rx="10" ry="8"/>
    <ellipse cx="975" cy="1145" rx="6" ry="9"/>
    <ellipse cx="900" cy="1035" rx="8" ry="6"/>
    <ellipse cx="770" cy="760" rx="16" ry="8" opacity=".4"/>
    <ellipse cx="750" cy="690" rx="10" ry="6" opacity=".4"/>
  </g>
  <!-- field polygon interior -->
  <g clip-path="url(#cpP)">
    <polygon points="1036,671 1318.5,1006.5 1117.5,1159.5 831,823" fill="#777985"/>
    <g filter="url(#b8)">
      <polygon points="1036,671 950,735 1038,832 1130,901 1231,962 1292,974" fill="#487d69" opacity=".92"/>
      <polygon points="887,890 973,853 1082,963 1206,1090 1117.5,1159.5" fill="#58747a" opacity=".9"/>
      <polygon points="831,823 887,890 973,853 940,770" fill="#6f7880" opacity=".7"/>
      <ellipse cx="1000" cy="805" rx="22" ry="14" fill="#3f8268"/>
      <ellipse cx="975" cy="742" rx="18" ry="26" fill="#43846b"/>
      <ellipse cx="1055" cy="840" rx="14" ry="16" fill="#41806a"/>
      <ellipse cx="1125" cy="835" rx="60" ry="18" fill="#3f7c65" transform="rotate(32 1125 835)"/>
      <ellipse cx="1060" cy="760" rx="40" ry="14" fill="#4a8070" transform="rotate(45 1060 760)"/>
      <ellipse cx="1030" cy="905" rx="70" ry="20" fill="#7d7c89" transform="rotate(42 1030 905)" opacity=".85"/>
      <ellipse cx="1190" cy="985" rx="80" ry="24" fill="#7c7c8a" transform="rotate(47 1190 985)" opacity=".8"/>
      <ellipse cx="1030" cy="1000" rx="18" ry="12" fill="#4c8270" opacity=".8"/>
      <ellipse cx="1155" cy="1085" rx="14" ry="10" fill="#4f7f72" opacity=".7"/>
    </g>
    <g fill="#0f1a2c" filter="url(#b4)" opacity=".9">
      <ellipse cx="1140" cy="1125" rx="17" ry="14"/>
      <ellipse cx="1163" cy="1113" rx="14" ry="10"/>
    </g>
    <ellipse cx="1072" cy="888" rx="6" ry="5" fill="#4a4a58" filter="url(#b2)"/>
  </g>
  <!-- texture -->
  <rect x="659" y="595" width="832" height="637" filter="url(#noise)" opacity=".10"/>
  <!-- tile seams -->
  <g stroke="#e8ecd8" stroke-width="1" opacity=".27">
    <line x1="845.5" y1="595" x2="845.5" y2="1232"/><line x1="1101.5" y1="595" x2="1101.5" y2="1232"/><line x1="1357.5" y1="595" x2="1357.5" y2="1232"/>
    <line x1="659" y1="712.5" x2="1491" y2="712.5"/><line x1="659" y1="968.5" x2="1491" y2="968.5"/>
  </g>
  <!-- field outline -->
  <polygon points="1036,671 1318.5,1006.5 1117.5,1159.5 831,823" fill="none" stroke="#3388ff" stroke-width="3.2" stroke-linejoin="round"/>
  <!-- markers -->
  <g font-size="12" font-weight="bold" text-anchor="middle" letter-spacing="-0.3">
    <rect x="1026" y="733" width="45" height="19.5" rx="9.7" fill="#d12730"/><text x="1048.5" y="747" fill="#fff">23.2%</text>
    <rect x="900" y="824.5" width="45.5" height="19.5" rx="9.7" fill="#fff"/><text x="922.7" y="838.6" fill="#000">26.9%</text>
    <rect x="1226" y="991.2" width="45.5" height="19.5" rx="9.7" fill="#fff"/><text x="1248.8" y="1005.3" fill="#000">29.9%</text>
    <rect x="1089" y="1070" width="45.5" height="19.5" rx="9.7" fill="#fff"/><text x="1111.8" y="1084.1" fill="#000">29.8%</text>
  </g>
  <!-- fullscreen hint -->
  <path d="M1461.5 617v-3.5h3.5M1469.5 613.5h3.5v3.5M1473 621v3.500h-3.500M1465 624.500h-3.500v-3.500" fill="none" stroke="#a9b1dc" stroke-width="1.8" opacity=".85"/>
  </g>
</svg>
<!-- zoom control -->
<div class="abs" style="left:10px;top:10px;width:34px;height:64px;border:2px solid rgba(0,0,0,.2);border-radius:4px;background-clip:padding-box"></div>
<div class="abs" style="left:12px;top:12px;width:30px;height:30px;background:#fff;border-radius:2px 2px 0 0;border-bottom:1px solid #ccc;color:#000;font-weight:normal;-webkit-text-stroke:.55px #000;font-size:24px;line-height:31px;text-align:center;font-family:'Liberation Sans',sans-serif">+</div>
<div class="abs" style="left:12px;top:42px;width:30px;height:30px;background:#fff;border-radius:0 0 2px 2px;color:#000;font-weight:normal;-webkit-text-stroke:.55px #000;font-size:24px;line-height:30px;text-align:center;font-family:'Liberation Sans',sans-serif">−</div>
<!-- attribution -->
<div class="abs" style="left:9px;top:622.7px;width:820px;height:15px;background:rgba(255,255,255,.8)"></div>
<svg class="abs" style="left:13.5px;top:626.7px" width="12" height="7" viewBox="0 0 12 8" preserveAspectRatio="none"><rect width="12" height="4" fill="#4c7be1"/><rect y="4" width="12" height="4" fill="#ffd500"/></svg>
<div class="tx" style="left:28.5px;top:623px;font-size:12px;line-height:15px;color:#333;letter-spacing:0"><span style="color:#0078a8">Leaflet</span> | Tiles © Esri — Source: Esri, i-cubed, USDA, USGS, AEX, GeoEye, Getmapping, Aerogrid, IGN, IGP, UPR-EGP, and the GIS User Community</div>
</div>
<!--MAPEND-->

</body>
</html>
